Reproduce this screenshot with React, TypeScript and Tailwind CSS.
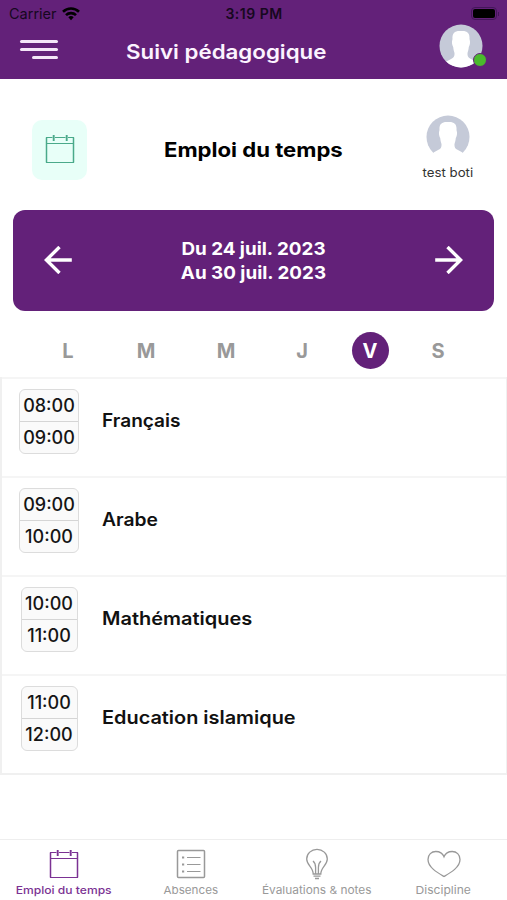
import React from 'react';

interface Lesson {
  start: string;
  end: string;
  subject: string;
  boxClass: string;
  subjectClass: string;
}

interface IconProps {
  className?: string;
}

const lessons: Lesson[] = [
  { start: '08:00', end: '09:00', subject: 'Français', boxClass: 'w-[60px]', subjectClass: 'scale-x-[1.060]' },
  { start: '09:00', end: '10:00', subject: 'Arabe', boxClass: 'w-[60px]', subjectClass: 'scale-x-[1.070]' },
  { start: '10:00', end: '11:00', subject: 'Mathématiques', boxClass: 'w-[57px]', subjectClass: 'scale-x-[1.110]' },
  { start: '11:00', end: '12:00', subject: 'Education islamique', boxClass: 'w-[57px]', subjectClass: 'scale-x-[1.105]' },
];

const days = [
  { label: 'L', cell: 'w-[78px]' },
  { label: 'M', cell: 'w-[78px]' },
  { label: 'M', cell: 'w-[82px]' },
  { label: 'J', cell: 'w-[70px]' },
  { label: 'V', cell: 'w-[66px]', active: true },
  { label: 'S', cell: 'w-[70px]' },
];

const CalendarIcon: React.FC<IconProps> = ({ className = '' }) => (
  <svg viewBox="0 0 30 30" fill="none" stroke="currentColor" className={className}>
    <path d="M1.500 3.500v25M28.500 3.500v25" strokeWidth="1.500" />
    <path d="M1 3.500h6.500M10 3.500h10.500M23 3.500h6M1 9.500h28M1 28.500h28" />
    <path d="M8.700 1v6M21.700 1v6" strokeWidth="1.900" />
  </svg>
);

const ListIcon: React.FC<IconProps> = ({ className = '' }) => (
  <svg viewBox="0 0 30 30" fill="none" stroke="currentColor" className={className}>
    <rect x="1.500" y="1.500" width="27" height="27" rx="1" strokeWidth="1.500" />
    <path d="M11 8.500h13.500M11 15.500h13.500M11 22.500h13.500" />
    <path d="M6 8.500h2.200M6 15.500h2.200M6 22.500h2.200" strokeWidth="2.200" />
  </svg>
);

const BulbIcon: React.FC<IconProps> = ({ className = '' }) => (
  <svg viewBox="0 0 24 32" fill="none" stroke="currentColor" strokeWidth="1.300" className={className}>
    <path d="M8.200 26C8.200 19.500 1.700 17 1.700 11a10.300 9.700 0 0 1 20.600 0C22.300 17 15.800 19.500 15.800 26Z" />
    <path d="M10.600 26v-6.500Q10.500 15 8 13M13.400 26v-6.500Q13.500 15 16 13M8.500 28.200h7M10 30.500h4" />
  </svg>
);

const HeartIcon: React.FC<IconProps> = ({ className = '' }) => (
  <svg viewBox="0 0 34 28" fill="none" stroke="currentColor" strokeWidth="1.300" className={className}>
    <path d="M17 26.500C11 23 1 17.500 1 9.500C1 4.500 4.500 1.500 8.800 1.500C12.500 1.500 15.700 3.500 17 6.800C18.300 3.500 21.500 1.500 25.200 1.500C29.500 1.500 33 4.500 33 9.500C33 17.500 23 23 17 26.500Z" />
  </svg>
);

const ArrowIcon: React.FC<IconProps> = ({ className = '' }) => (
  <svg viewBox="0 0 28 28" fill="none" stroke="currentColor" strokeWidth="3.400" className={className}>
    <path d="M27.800 14H2M15.500 1L2.400 14L15.500 27" />
  </svg>
);

const Avatar: React.FC<IconProps> = ({ className = '' }) => (
  <svg viewBox="0 0 44 44" className={className}>
    <defs>
      <clipPath id="avatar-clip">
        <circle cx="22" cy="22" r="21.500" />
      </clipPath>
    </defs>
    <circle cx="22" cy="22" r="21.500" fill="#c5cad8" />
    <path
      clipPath="url(#avatar-clip)"
      fill="#fff"
      d="M22 7C28 6.500 31 9 30.500 15C31.500 18 31 21 29.800 23C29.500 26 29 27.500 28.500 29C28.300 32 29 33.500 31.500 34.800L36.500 37.500L38 44H6L7.500 37.500L12.500 34.800C15 33.500 15.700 32 15.500 29C15 27.500 14.500 26 14.200 23C13 21 12.500 18 13.500 15C13 9 16 6.500 22 7Z"
    />
  </svg>
);

const StatusBar: React.FC = () => (
  <div className="grid h-[27px] grid-cols-[1fr_auto_1fr] items-center pl-[9px] pr-[8px] text-[#160820]">
    <div className="flex items-center gap-[5px]">
      <span className="text-[14.500px]">Carrier</span>
      <svg viewBox="0 0 18 14" className="h-[14px] w-[18px] text-black" fill="none" stroke="currentColor" strokeWidth="2.600">
        <path d="M1 4.800a11.500 11.500 0 0 1 16 0M4 8.200a7 7 0 0 1 10 0" />
        <path d="M6.300 10.200a4 4 0 0 1 5.400 0L9 13.300Z" fill="currentColor" stroke="none" />
      </svg>
    </div>
    <span className="text-[14px] font-semibold tracking-[0.500px]">3:19 PM</span>
    <div className="flex items-center justify-end gap-px">
      <div className="h-[13px] w-[26px] rounded-[4px] border border-[#43165a] p-px">
        <div className="h-full rounded-[2px] bg-black" />
      </div>
      <div className="h-1 w-px bg-[#43165a]" />
    </div>
  </div>
);

const Header: React.FC = () => (
  <header className="h-[79px] bg-[#632179]">
    <StatusBar />
    <div className="flex h-[52px] items-start">
      <button className="ml-[20px] mt-[13px] flex w-[38px] flex-col items-end gap-[5px]">
        <span className="h-[3px] w-full rounded-full bg-[#f4e6f8]" />
        <span className="h-[3px] w-full rounded-full bg-[#f4e6f8]" />
        <span className="h-[3px] w-[26px] rounded-full bg-[#f4e6f8]" />
      </button>
      <h1 className="ml-[68px] mt-[10px] w-[204px] origin-left scale-x-[1.115] whitespace-nowrap text-[20px] font-semibold leading-[30px] text-[#fcf3ff]">
        Suivi pédagogique
      </h1>
      <div className="relative -mt-[3px] ml-[109px]">
        <Avatar className="h-[44px] w-[44px]" />
        <span className="absolute -right-[4px] bottom-[1px] h-[14px] w-[14px] rounded-full border border-[#632179] bg-[#4aba2c]" />
      </div>
    </div>
  </header>
);

const TitleRow: React.FC = () => (
  <div className="flex h-[131px] items-start">
    <div className="ml-[32px] mt-[41px] flex h-[60px] w-[55px] items-start justify-center rounded-[10px] bg-[#e8fff8] pt-[14px]">
      <CalendarIcon className="h-[30px] w-[30px] text-[#4aaa8a]" />
    </div>
    <h2 className="ml-[77px] mt-[56px] w-[182px] origin-left scale-x-[1.105] whitespace-nowrap text-[20px] font-bold leading-[30px] text-black">
      Emploi du temps
    </h2>
    <div className="ml-[57px] mt-[36px] flex w-[90px] flex-col items-center">
      <div className="h-[38px] overflow-hidden">
        <Avatar className="h-[44px] w-[44px]" />
      </div>
      <span className="mt-[11px] scale-x-[1.060] whitespace-nowrap text-[12.500px] leading-[18px] text-[#333]">test boti</span>
    </div>
  </div>
);

const WeekPicker: React.FC = () => (
  <div className="mx-[13px] flex h-[101px] w-[481px] items-center justify-between rounded-[12px] bg-[#632179] px-[31px] text-white">
    <button className="pb-[2px]">
      <ArrowIcon className="h-[28px] w-[28px]" />
    </button>
    <div className="scale-x-[1.045] whitespace-nowrap pt-px text-center text-[18px] font-bold leading-[24.500px]">
      <p>Du 24 juil. 2023</p>
      <p>Au 30 juil. 2023</p>
    </div>
    <button className="pb-[2px]">
      <ArrowIcon className="h-[28px] w-[28px] rotate-180" />
    </button>
  </div>
);

const DayTabs: React.FC = () => (
  <div className="flex h-[66px] pl-[29px] pt-[21px]">
    {days.map((day, i) => (
      <div key={i} className={`flex justify-center ${day.cell}`}>
        <button
          className={`h-[37px] w-[37px] rounded-full text-[20px] font-bold ${
            day.active ? 'bg-[#632179] text-white' : 'text-[#999]'
          }`}
        >
          {day.label}
        </button>
      </div>
    ))}
  </div>
);

const LessonRow: React.FC<{ lesson: Lesson }> = ({ lesson }) => (
  <li className="flex h-[99px] items-start border-t-2 border-[#f5f5f5] pl-[2px] pt-[10px]">
    <div className="flex w-[90px] justify-center">
      <div
        className={`flex h-[65px] flex-col rounded-[6px] border-[1.500px] border-[#dcdcdc] bg-[#fafafa] text-center text-[18px] font-medium text-[#151515] ${lesson.boxClass}`}
      >
        <span className="h-[32px] border-b border-[#d5d5d5] leading-[32px]">{lesson.start}</span>
        <span className="h-[31px] leading-[32px]">{lesson.end}</span>
      </div>
    </div>
    <span className={`ml-[8px] mt-[18px] origin-left whitespace-nowrap text-[18px] font-semibold leading-[28px] text-[#111] ${lesson.subjectClass}`}>
      {lesson.subject}
    </span>
  </li>
);

const BottomNav: React.FC = () => (
  <nav className="mt-auto flex h-[61px] border-t border-[#eee] text-[11px] leading-[14px] text-[#999]">
    <div className="flex w-[128px] flex-col items-center pt-[9px] font-medium text-[#7b3293]">
      <CalendarIcon className="h-[30px] w-[30px]" />
      <span className="mt-[4px] scale-x-[1.100] whitespace-nowrap">Emploi du temps</span>
    </div>
    <div className="flex w-[125px] flex-col items-center pt-[9px]">
      <ListIcon className="h-[30px] w-[30px]" />
      <span className="mt-[4px] scale-x-[1.060] whitespace-nowrap">Absences</span>
    </div>
    <div className="flex w-[128px] flex-col items-center pt-[8px]">
      <BulbIcon className="h-[32px] w-[24px]" />
      <span className="mt-[3px] scale-x-[1.080] whitespace-nowrap">Évaluations &amp; notes</span>
    </div>
    <div className="flex w-[125px] flex-col items-center pt-[10px]">
      <HeartIcon className="h-[28px] w-[34px]" />
      <span className="mt-[5px] scale-x-[1.100] whitespace-nowrap">Discipline</span>
    </div>
  </nav>
);

const App: React.FC = () => {
  return (
    <div className="flex h-[900px] w-[507px] flex-col overflow-hidden bg-white font-['Inter',sans-serif]">
      <Header />
      <TitleRow />
      <WeekPicker />
      <DayTabs />
      <ul className="h-[398px] border-b-2 border-l-2 border-r border-[#f0f0f0]">
        {lessons.map((lesson) => (
          <LessonRow key={lesson.subject} lesson={lesson} />
        ))}
      </ul>
      <BottomNav />
    </div>
  );
};

export default App;
